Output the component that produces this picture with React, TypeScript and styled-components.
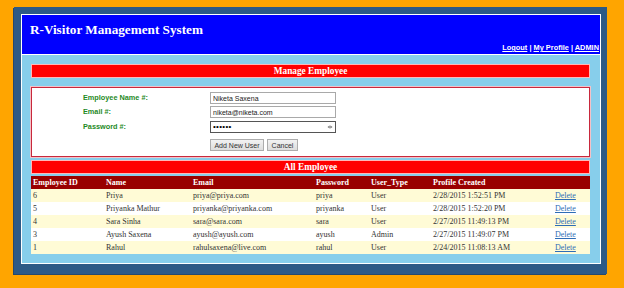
import React from "react";
import styled, { createGlobalStyle } from "styled-components";

const GlobalStyle = createGlobalStyle`
  html, body {
    margin: 0;
    padding: 0;
    background: #ffa500;
  }
  body {
    width: 624px;
    height: 288px;
    overflow: hidden;
    font-family: "Liberation Serif", "Times New Roman", serif;
  }
`;

const Page = styled.div`
  padding: 7px 17px 15px 14px;
`;

const Frame = styled.div`
  background: #2d5a86;
  padding: 7px 6px 10px 7px;
  box-shadow: -1px 1px 0 #27496c;
`;

const Inner = styled.div`
  border: 1px solid #ffffff;
  background: #87ceeb;
`;

const Header = styled.div`
  height: 40px;
  background: #0000ff;
  border-bottom: 1px solid #ffffff;
  display: flex;
  flex-direction: column;
  justify-content: space-between;
  padding: 7px 1px 2px 8px;
  box-sizing: border-box;
`;

const Title = styled.h1`
  margin: 0;
  font-family: "Liberation Serif", "Times New Roman", serif;
  font-weight: bold;
  font-size: 13.2px;
  line-height: 15px;
  color: #ffffff;
`;

const NavLinks = styled.div`
  align-self: flex-end;
  font-family: "Liberation Sans", Arial, sans-serif;
  font-weight: bold;
  font-size: 7.4px;
  line-height: 9px;
  color: #ffffff;
  white-space: pre;
`;

const NavLink = styled.a`
  color: #ffffff;
  text-decoration: underline;
`;

const Content = styled.div`
  padding: 9px 10px 9px 9px;
  display: flex;
  flex-direction: column;
`;

const Bar = styled.div<{ $mt?: number }>`
  background: #ff0000;
  border: 1px solid #ffb8b8;
  color: #ffffff;
  font-weight: bold;
  font-size: 9.3px;
  text-align: center;
  height: 12px;
  line-height: 12px;
  margin-top: ${(p) => p.$mt ?? 0}px;
`;

const FormBox = styled.div`
  margin-top: 9px;
  background: #ffffff;
  border: 1px solid #c8283c;
  box-shadow: 0 0 0 1px #f3c2c8;
  padding: 4px 0 5px 51px;
  display: grid;
  grid-template-columns: 127px 126px;
  row-gap: 2.3px;
  align-items: center;
`;

const Label = styled.label`
  font-family: "Liberation Sans", Arial, sans-serif;
  font-weight: bold;
  font-size: 7.3px;
  color: #1f8a1f;
  align-self: start;
  padding-top: 1px;
`;

const InputWrap = styled.div`
  position: relative;
  height: 12px;
`;

const TextInput = styled.input`
  box-sizing: border-box;
  width: 126px;
  height: 12px;
  border: 1px solid #a9a9a9;
  padding: 0 2px;
  margin: 0;
  font-family: "Liberation Sans", Arial, sans-serif;
  font-size: 7px;
  color: #222;
  background: #fff;
  outline: none;
  display: block;
`;

const PasswordInput = styled(TextInput)`
  border-color: #555;
  font-size: 8px;
  letter-spacing: 0.3px;
  color: #000;
`;

const Reveal = styled.svg`
  position: absolute;
  right: 3px;
  top: 3px;
`;

const ButtonRow = styled.div`
  grid-column: 2;
  display: flex;
  gap: 3px;
  margin-top: 4.5px;
`;

const Button = styled.button<{ $w: number }>`
  box-sizing: border-box;
  width: ${(p) => p.$w}px;
  height: 12px;
  padding: 0;
  margin: 0;
  border: 1px solid #adadad;
  background: linear-gradient(#f2f2f2, #dddddd);
  font-family: "Liberation Sans", Arial, sans-serif;
  font-size: 7px;
  color: #333;
`;

const Table = styled.table`
  margin-top: 2px;
  width: 100%;
  border-collapse: collapse;
  table-layout: fixed;
  font-family: "Liberation Serif", "Times New Roman", serif;
  font-size: 8px;
`;

const HeadCell = styled.th`
  background: #990000;
  color: #ffffff;
  font-weight: bold;
  text-align: left;
  height: 13px;
  padding: 0 0 0 2px;
  line-height: 13px;
  white-space: nowrap;
`;

const Row = styled.tr<{ $alt: boolean }>`
  background: ${(p) => (p.$alt ? "#ffffff" : "#fffbd6")};
  color: #333333;
`;

const Cell = styled.td`
  height: 13px;
  padding: 0 0 0 2px;
  line-height: 13px;
  white-space: nowrap;
`;

const DeleteLink = styled.a`
  color: #2f6db5;
  text-decoration: underline;
`;

const cols = [73, 87, 123, 55, 62, 122, 37];

const rows = [
  ["6", "Priya", "priya@priya.com", "priya", "User", "2/28/2015 1:52:51 PM"],
  ["5", "Priyanka Mathur", "priyanka@priyanka.com", "priyanka", "User", "2/28/2015 1:52:20 PM"],
  ["4", "Sara Sinha", "sara@sara.com", "sara", "User", "2/27/2015 11:49:13 PM"],
  ["3", "Ayush Saxena", "ayush@ayush.com", "ayush", "Admin", "2/27/2015 11:49:07 PM"],
  ["1", "Rahul", "rahulsaxena@live.com", "rahul", "User", "2/24/2015 11:08:13 AM"],
];

export default function App() {
  return (
    <>
      <GlobalStyle />
      <Page>
        <Frame>
          <Inner>
            <Header>
              <Title>R-Visitor Management System</Title>
              <NavLinks>
                <NavLink href="#">Logout</NavLink>
                {" | "}
                <NavLink href="#">My Profile</NavLink>
                {" | "}
                <NavLink href="#">ADMIN</NavLink>
              </NavLinks>
            </Header>
            <Content>
              <Bar>Manage Employee</Bar>
              <FormBox>
                <Label>Employee Name #:</Label>
                <InputWrap>
                  <TextInput defaultValue="Niketa Saxena" />
                </InputWrap>
                <Label>Email #:</Label>
                <InputWrap>
                  <TextInput defaultValue="niketa@niketa.com" />
                </InputWrap>
                <Label>Password #:</Label>
                <InputWrap>
                  <PasswordInput type="password" defaultValue="niketa" />
                  <Reveal width="6" height="6" viewBox="0 0 6 6">
                    <path d="M0.5 3 L3 1.5 L5.5 3 L3 4.5 Z" fill="#555" />
                    <circle cx="3" cy="3" r="0.8" fill="#fff" />
                  </Reveal>
                </InputWrap>
                <ButtonRow>
                  <Button $w={54}>Add New User</Button>
                  <Button $w={31}>Cancel</Button>
                </ButtonRow>
              </FormBox>
              <Bar $mt={3}>All Employee</Bar>
              <Table>
                <colgroup>
                  {cols.map((w, i) => (
                    <col key={i} style={{ width: w }} />
                  ))}
                </colgroup>
                <thead>
                  <tr>
                    <HeadCell>Employee ID</HeadCell>
                    <HeadCell>Name</HeadCell>
                    <HeadCell>Email</HeadCell>
                    <HeadCell>Password</HeadCell>
                    <HeadCell>User_Type</HeadCell>
                    <HeadCell>Profile Created</HeadCell>
                    <HeadCell />
                  </tr>
                </thead>
                <tbody>
                  {rows.map((r, i) => (
                    <Row key={r[0]} $alt={i % 2 === 1}>
                      {r.map((c, j) => (
                        <Cell key={j}>{c}</Cell>
                      ))}
                      <Cell>
                        <DeleteLink href="#">Delete</DeleteLink>
                      </Cell>
                    </Row>
                  ))}
                </tbody>
              </Table>
            </Content>
          </Inner>
        </Frame>
      </Page>
    </>
  );
}
